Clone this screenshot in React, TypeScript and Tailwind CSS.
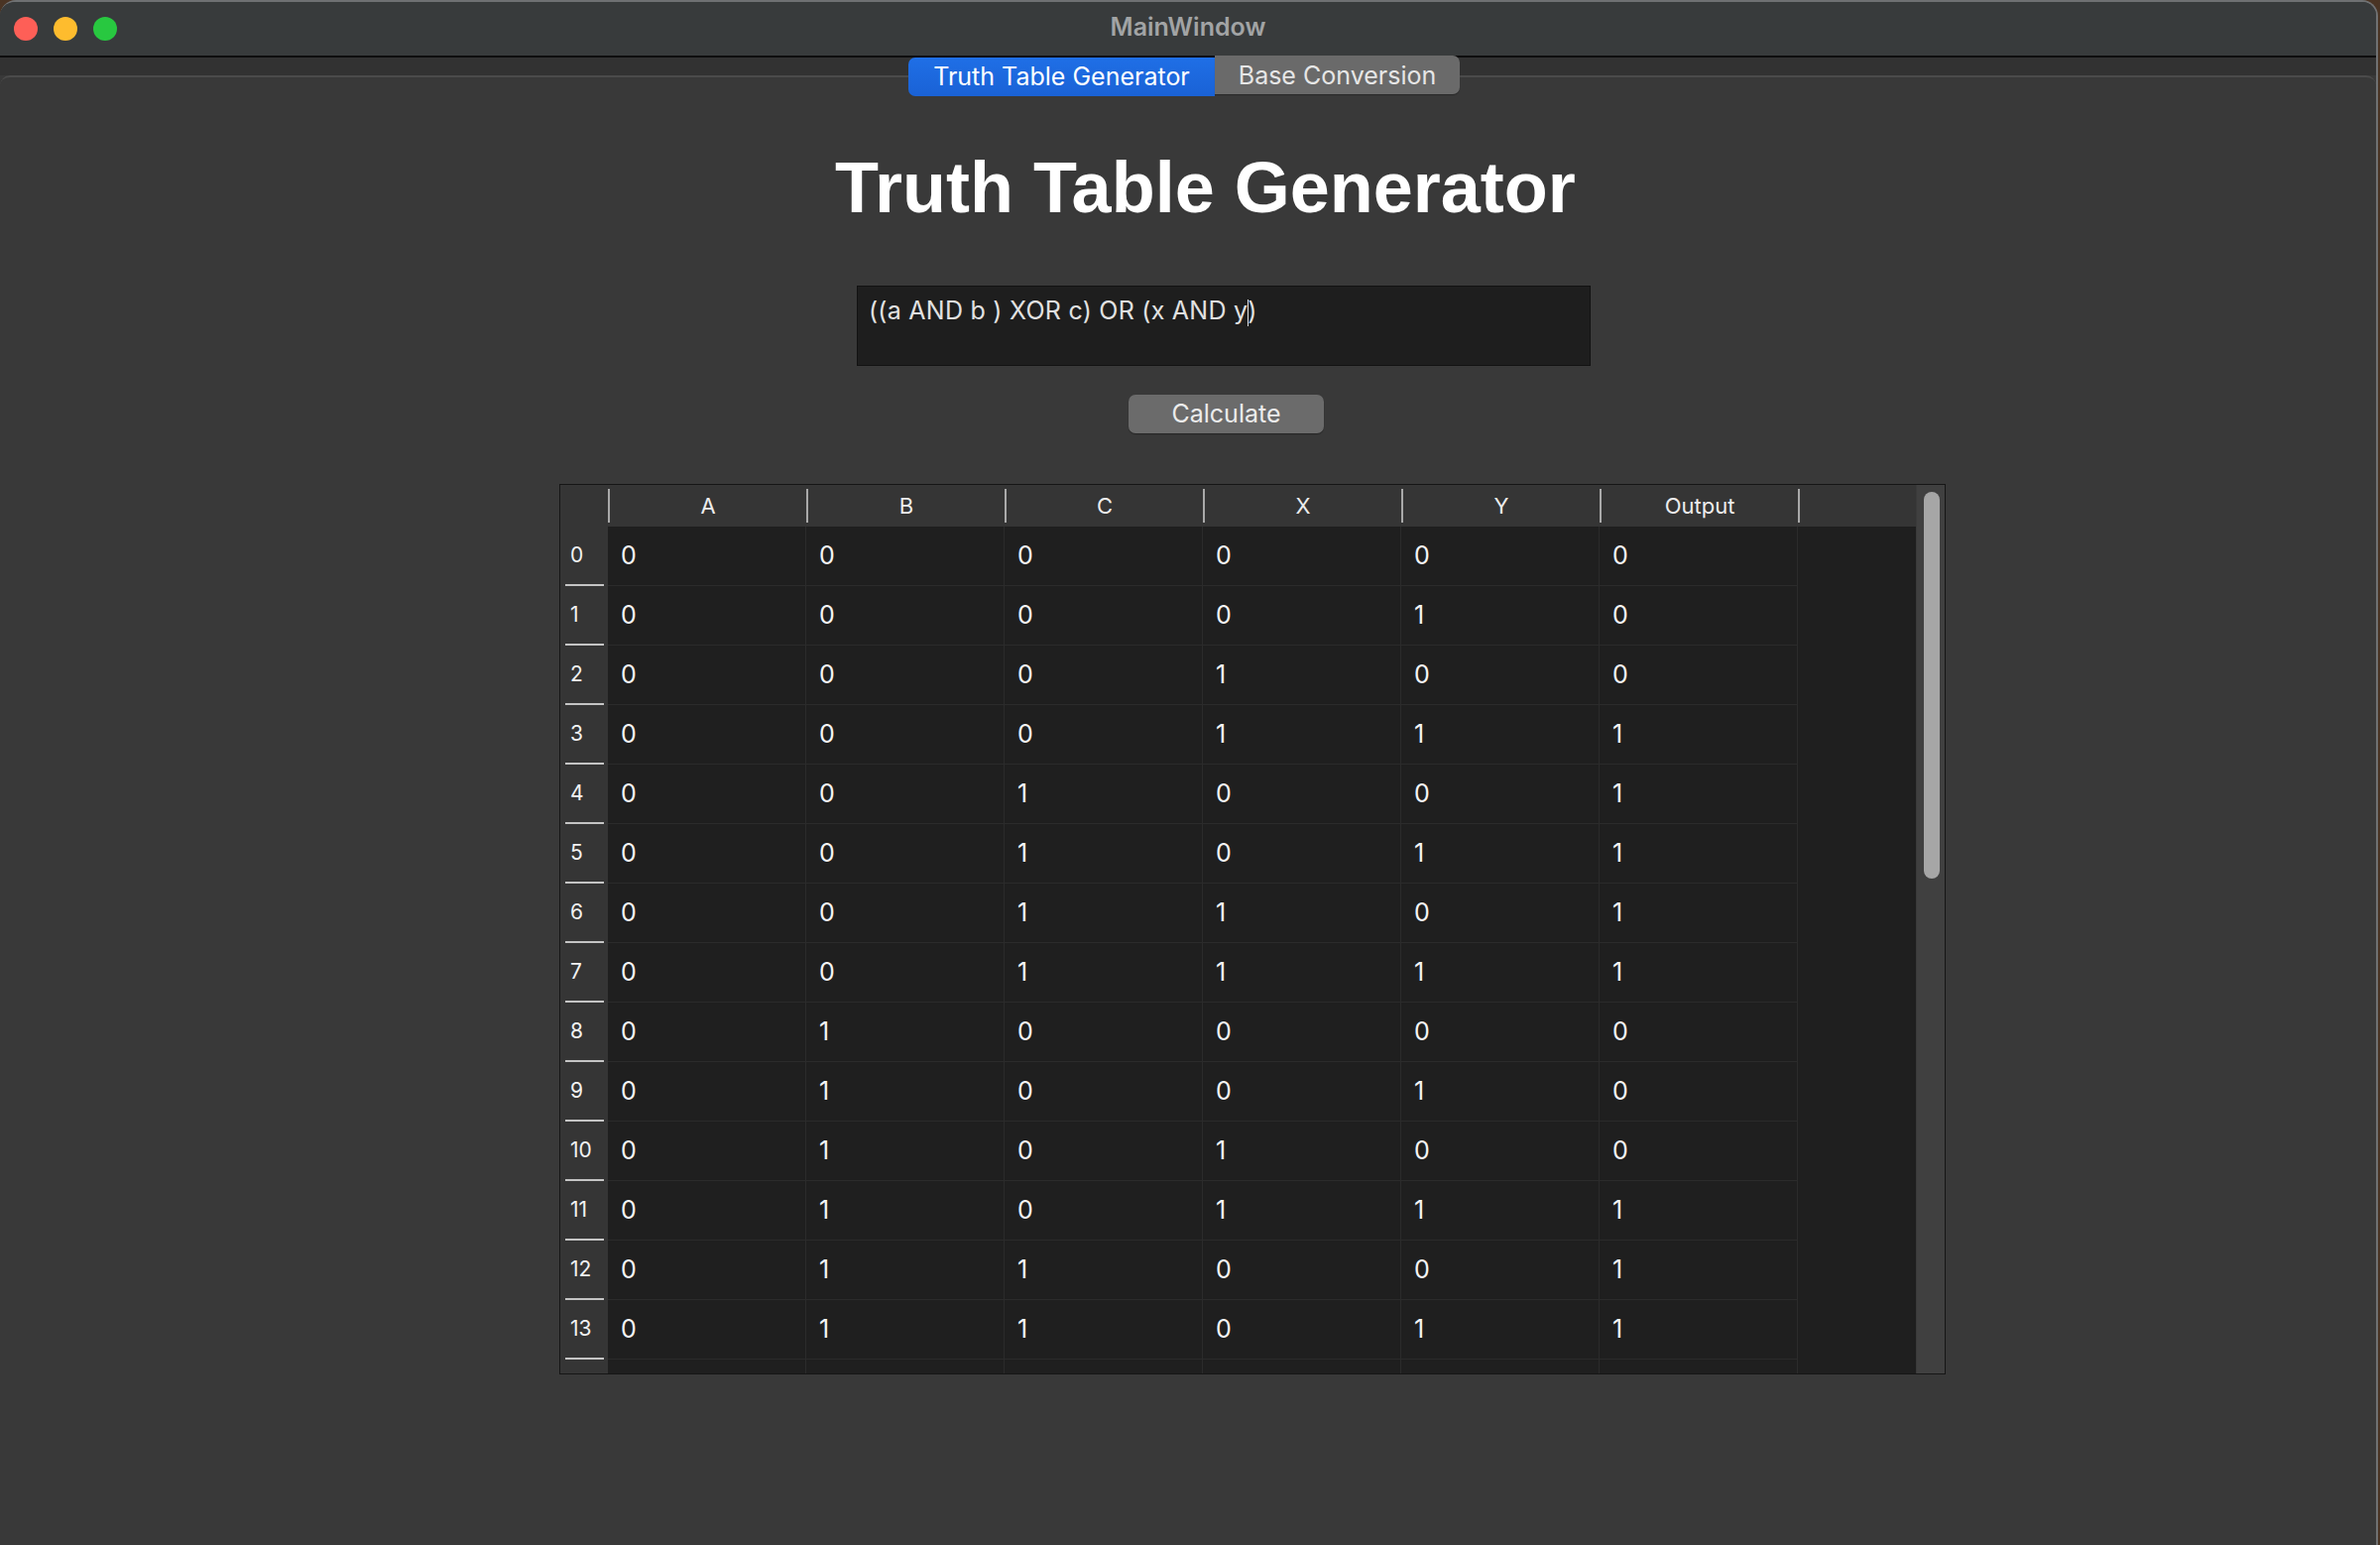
import React from "react";

const cols = ["A", "B", "C", "X", "Y", "Output"];
const rows = Array.from({ length: 14 }, (_, i) => {
  const a = (i >> 4) & 1,
    b = (i >> 3) & 1,
    c = (i >> 2) & 1,
    x = (i >> 1) & 1,
    y = i & 1;
  const out = ((a & b) ^ c) | (x & y);
  return [a, b, c, x, y, out];
});

const sys = { fontFamily: "Inter, 'Noto Sans', sans-serif" };
const arial = { fontFamily: "'Liberation Sans', Arial, sans-serif" };

export default function App() {
  return (
    <div className="w-[2400px] h-[1558px] flex bg-[#4a3424] overflow-hidden" style={sys}>
      <div className="w-[2398px] h-full flex flex-col rounded-t-[16px] overflow-hidden border-t-2 border-r-2 border-[#6f7173] bg-[#393939]">
        {/* title bar */}
        <div className="h-[54px] shrink-0 grid grid-cols-[1fr_auto_1fr] items-center bg-[#383b3c]">
          <div className="flex items-center gap-[16px] pl-[14px]">
            <div className="w-[24px] h-[24px] rounded-full bg-[#fe5f57]" />
            <div className="w-[24px] h-[24px] rounded-full bg-[#febc2e]" />
            <div className="w-[24px] h-[24px] rounded-full bg-[#28c840]" />
          </div>
          <div className="text-[25px] font-semibold text-[#a2a4a5] -mt-[2px]">MainWindow</div>
          <div />
        </div>
        <div className="h-[2px] shrink-0 bg-[#0e0e0e]" />
        <div className="h-[18px] shrink-0 bg-[#323232]" />
        {/* pane */}
        <div className="flex-1 flex flex-col items-start border-t-2 border-[#4b4b4b] rounded-t-[10px] bg-[#393939]">
          {/* tabs */}
          <div className="flex -mt-[20px] ml-[916px] h-[39px]">
            <div className="w-[309px] h-[39px] rounded-l-[7px] bg-gradient-to-b from-[#1f6fe6] to-[#1a62d6] text-white text-[25px] flex items-center justify-center">
              Truth Table Generator
            </div>
            <div className="w-[247px] h-[39px] -mt-[2px] pt-[3px] rounded-r-[7px] bg-[#6a6a6a] text-[#e6e6e6] text-[25px] flex items-center justify-center shadow-[0_1px_1px_rgba(0,0,0,0.3)]">
              Base Conversion
            </div>
          </div>

          {/* heading */}
          <h1
            className="mt-[56px] ml-[842px] text-[72px] leading-[72px] font-bold text-white"
            style={arial}
          >
            Truth Table Generator
          </h1>

          {/* input */}
          <div className="mt-[63px] ml-[864px] w-[740px] h-[81px] bg-[#1e1e1e] border border-[#121212] pl-[11px] pt-[9px]">
            <div className="text-[25px] leading-[31px] tracking-[0.25px] text-[#e2e2e2] whitespace-pre">
              ((a AND b ) XOR c) OR (x AND y
              <span className="inline-block w-[1px] h-[27px] bg-[#e0e0e0] align-middle -mr-[1px]" />
              )
            </div>
          </div>

          {/* button */}
          <div className="mt-[29px] ml-[1138px] w-[197px] h-[39px] rounded-[7px] bg-[#6b6b6b] text-[#ececec] text-[25px] flex items-center justify-center shadow-[0_1px_1px_rgba(0,0,0,0.35)]">
            Calculate
          </div>

          {/* table */}
          <div className="mt-[51px] ml-[564px] w-[1398px] h-[898px] border border-[#161616] flex bg-[#1f1f1f]">
            <div className="flex-1 flex flex-col overflow-hidden">
              {/* header */}
              <div className="h-[42px] shrink-0 flex bg-[#353535]">
                <div className="w-[48px] shrink-0" />
                {cols.map((c, i) => (
                  <div key={c} className="w-[200px] shrink-0 h-full flex items-center">
                    <div className="w-[2px] h-[34px] bg-[#a9a9a9]" />
                    <div className="flex-1 text-center text-[22px] text-[#ededed]">{c}</div>
                    {i === cols.length - 1 && <div className="w-[2px] h-[34px] bg-[#a9a9a9] -mr-[2px]" />}
                  </div>
                ))}
                <div className="flex-1" />
              </div>
              {rows.map((r, ri) => (
                <div key={ri} className="h-[60px] shrink-0 flex">
                  <div className="w-[48px] shrink-0 bg-[#353535] flex flex-col">
                    <div className="flex-1 flex items-center pl-[10px] text-[21px] text-[#f2f2f2]">{ri}</div>
                    <div className="h-[2px] ml-[5px] mr-[4px] bg-[#c4c4c4]" />
                  </div>
                  {r.map((v, ci) => (
                    <div
                      key={ci}
                      className="w-[200px] shrink-0 border-r border-b border-[#2b2b2b] flex items-center pl-[13px] text-[25px] text-[#f5f5f5]"
                    >
                      {v}
                    </div>
                  ))}
                  <div className="flex-1" />
                </div>
              ))}
              {/* partially visible next row */}
              <div className="flex-1 flex">
                <div className="w-[48px] shrink-0 bg-[#353535]" />
                {cols.map((c) => (
                  <div key={c} className="w-[200px] shrink-0 border-r border-[#2b2b2b]" />
                ))}
                <div className="flex-1" />
              </div>
            </div>
            {/* scrollbar */}
            <div className="w-[29px] shrink-0 bg-[#404040] border-l border-[#3a3a3a] pt-[7px] pl-[7px]">
              <div className="w-[16px] h-[390px] rounded-full bg-[#a6a6a6]" />
            </div>
          </div>
        </div>
      </div>
    </div>
  );
}
